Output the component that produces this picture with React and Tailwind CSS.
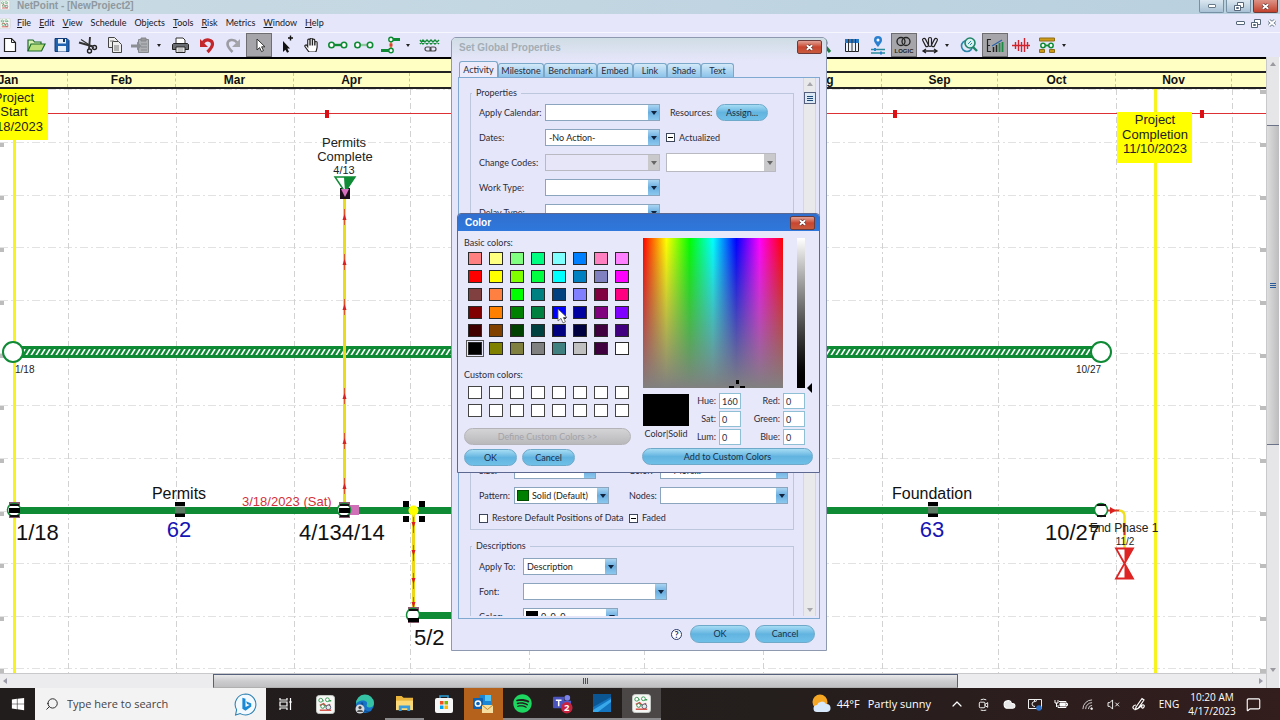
import clsx from 'clsx';
import { Cloud, ChevronUp, MessageSquare, Search, PenTool } from 'lucide-react';
import { FaHandPaper, FaSpotify, FaWindows } from 'react-icons/fa';

const GREEN = '#0f8a35';

const MENU = ['File', 'Edit', 'View', 'Schedule', 'Objects', 'Tools', 'Risk', 'Metrics', 'Window', 'Help'];
const UNDERLINED = ['File', 'Edit', 'View', 'Tools', 'Risk', 'Window', 'Help'];

const MONTHS = [
  { name: 'Jan', width: 119 },
  { name: 'Feb', width: 108 },
  { name: 'Mar', width: 118 },
  { name: 'Apr', width: 116 },
  { name: 'May', width: 119 },
  { name: 'Jun', width: 115 },
  { name: 'Jul', width: 119 },
  { name: 'Aug', width: 119 },
  { name: 'Sep', width: 116 },
  { name: 'Oct', width: 118 },
  { name: 'Nov', width: 116 },
];
const GRID_X = [68, 176, 294, 410, 529, 644, 763, 882, 998, 1116, 1232];
const GRID_Y = [0, 53, 106, 158, 211, 264, 316, 369, 422, 474, 527, 579];

const BASIC_COLORS = [
  '#ff8080', '#ffff80', '#80ff80', '#00ff80', '#80ffff', '#0080ff', '#ff80c0', '#ff80ff',
  '#ff0000', '#ffff00', '#80ff00', '#00ff40', '#00ffff', '#0080c0', '#8080c0', '#ff00ff',
  '#804040', '#ff8040', '#00ff00', '#008080', '#004080', '#8080ff', '#800040', '#ff0080',
  '#800000', '#ff8000', '#008000', '#008040', '#0000ff', '#0000a0', '#800080', '#8000ff',
  '#400000', '#804000', '#004000', '#004040', '#000080', '#000040', '#400040', '#400080',
  '#000000', '#808000', '#808040', '#808080', '#408080', '#c0c0c0', '#400040', '#ffffff',
];

/* ---------- small shared pieces ---------- */

function NetPointIcon({ className }) {
  return (
    <svg viewBox="0 0 20 20" className={className} aria-hidden="true">
      <rect x="0.5" y="0.5" width="19" height="19" rx="3" fill="#f6f7f5" stroke="#c8cdc8" />
      <path d="M3 6h5M11 6h5" stroke="#3b9a55" strokeWidth="1.5" />
      <circle cx="5" cy="5.500" r="2" fill="#fff" stroke="#3b9a55" />
      <circle cx="12" cy="5" r="2" fill="#fff" stroke="#3b9a55" />
      <path d="M4 11l4-2 3 3 4-2" stroke="#d24c43" strokeWidth="1.500" fill="none" />
      <circle cx="7" cy="12" r="2" fill="#fff" stroke="#2f8c4a" />
      <circle cx="13" cy="13" r="2.500" fill="#dfeee2" stroke="#557" />
      <path d="M4 16h12" stroke="#d24c43" strokeWidth="1.500" />
    </svg>
  );
}

function CloseGlyph({ className, stroke = '#fff', edge = '#5b2a2a' }) {
  return (
    <svg viewBox="0 0 10 10" className={className} aria-hidden="true">
      <path d="M2 2.500l6 5M8 2.500l-6 5" stroke={edge} strokeWidth="3.400" />
      <path d="M2 2.500l6 5M8 2.500l-6 5" stroke={stroke} strokeWidth="2" />
    </svg>
  );
}

function CloseButton({ className }) {
  return (
    <button
      aria-label="Close"
      className={clsx('flex h-[14px] w-[25px] items-center justify-center rounded-[2px] border border-[#6b3a3a] bg-linear-to-b from-[#e0a195] via-[#c9452f] via-50% to-[#c75a3c]', className)}
    >
      <CloseGlyph className="size-[9px]" />
    </button>
  );
}

function Pill({ children, className, disabled }) {
  return (
    <button
      disabled={disabled}
      className={clsx(
        'h-[17px] shrink-0 rounded-full border text-center leading-[14px]',
        disabled
          ? 'border-[#b4b4b8] bg-linear-to-b from-[#d4d4d6] to-[#b9b9bc] text-[#a3a3a8]'
          : 'border-[#6fa9c9] bg-linear-to-b from-[#a5dcf4] via-[#62b4e0] via-50% to-[#6fc0e8] text-[#17304a]',
        className
      )}
    >
      {children}
    </button>
  );
}

function Combo({ id, value = '', className, swatch, disabled, tall, label }) {
  return (
    <div className={clsx('relative shrink-0', tall ? 'h-[19px]' : 'h-[17px]', className)}>
      <select
        id={id}
        aria-label={label}
        disabled={disabled}
        defaultValue={value}
        className={clsx(
          'h-full w-full appearance-none border text-[9px] leading-[14px] text-[#222] opacity-100 outline-none',
          swatch ? 'pl-[17px]' : 'pl-[3px]',
          disabled ? 'border-[#b9b9c2]' : 'border-[#8aa5bd]',
          disabled && !tall ? 'bg-[#e6e6f8]' : 'bg-white'
        )}
      >
        <option value={value}>{value}</option>
      </select>
      {swatch && <span className={clsx('absolute top-[3px] left-[3px] h-[11px] w-[12px] border border-black/40', swatch)} />}
      <span
        className={clsx(
          'pointer-events-none absolute inset-y-px right-px flex w-[11px] items-center justify-center',
          disabled ? 'bg-[#c9c9cc]' : 'bg-linear-to-b from-[#a9d4f2] via-[#6aaee0] via-50% to-[#8cc8ee]'
        )}
      >
        <svg viewBox="0 0 6 4" className="h-[4px] w-[6px]" aria-hidden="true">
          <path d="M0 0h6L3 4z" fill={disabled ? '#666' : '#10233f'} />
        </svg>
      </span>
    </div>
  );
}

function Check({ label, mixed }) {
  return (
    <label className="flex items-center gap-[4px]">
      <span className="relative flex size-[9px]">
        <input type="checkbox" className="size-[9px] appearance-none border border-[#3c4658] bg-white" />
        {mixed && <span className="pointer-events-none absolute top-[4px] left-[2px] h-px w-[5px] bg-black" />}
      </span>
      {label}
    </label>
  );
}

/* ---------- title bar, menu, toolbar ---------- */

function TitleBar() {
  return (
    <div className="flex h-[14px] shrink-0 items-start bg-linear-to-r from-[#c9dbe4] to-[#b9d0df]">
      <NetPointIcon className="-ml-px h-[10px] w-[12px]" />
      <h1 className="ml-[6px] font-['Liberation_Sans'] text-[10px] leading-[11px] font-bold text-[#8f989e]">NetPoint - [NewProject2]</h1>
      <div className="ml-auto flex gap-[2px] pr-[2px]">
        <button aria-label="Minimize" className="flex h-[13px] w-[25px] items-center justify-center rounded-b-[2px] border border-t-0 border-[#7890a4] bg-linear-to-b from-[#dbe7f0] to-[#a9c2d6]">
          <span className="h-[4px] w-[8px] rounded-[1px] border border-[#68798a] bg-white" />
        </button>
        <button aria-label="Restore" className="flex h-[13px] w-[25px] items-center justify-center rounded-b-[2px] border border-t-0 border-[#7890a4] bg-linear-to-b from-[#dbe7f0] to-[#a9c2d6]">
          <RestoreGlyph />
        </button>
        <button aria-label="Close" className="flex h-[13px] w-[25px] items-center justify-center rounded-b-[2px] border border-t-0 border-[#6b3a3a] bg-linear-to-b from-[#dc9387] to-[#c23f2c]">
          <CloseGlyph className="size-[9px]" />
        </button>
      </div>
    </div>
  );
}

function RestoreGlyph() {
  return (
    <svg viewBox="0 0 10 9" className="h-[9px] w-[10px]" fill="#fff" stroke="#56677a" aria-hidden="true">
      <path d="M3.500 0.500h6v5h-6z" />
      <path d="M0.500 3.500h6v5h-6zM2.500 5.500h2v1h-2z" />
    </svg>
  );
}

function MenuBar() {
  return (
    <nav className="flex h-[18px] shrink-0 items-center bg-[#e6e6fa] text-[9px] text-[#16181c]">
      <NetPointIcon className="-ml-px h-[11px] w-[12px]" />
      <div className="ml-[6px] flex gap-[8px]">
        {MENU.map((item) => (
          <button key={item} className="leading-[12px]">
            {UNDERLINED.includes(item) ? <><u>{item[0]}</u>{item.slice(1)}</> : item}
          </button>
        ))}
      </div>
      <div className="ml-auto flex items-center gap-[6px] pr-[3px]">
        <button aria-label="Minimize document" className="h-[4px] w-[9px] rounded-[1px] border border-[#56677a] bg-white" />
        <button aria-label="Restore document"><RestoreGlyph /></button>
        <button aria-label="Close document"><CloseGlyph className="size-[10px]" edge="#56677a" /></button>
      </div>
    </nav>
  );
}

function Tool({ label, active, children }) {
  return (
    <button
      aria-label={label}
      className={clsx('flex h-full w-[26px] shrink-0 items-center justify-center', active && 'border border-[#6d6d72] bg-[#a6a6aa]')}
    >
      <svg viewBox="0 0 22 20" className="h-[20px] w-[22px] shrink-0" fill="none">{children}</svg>
    </button>
  );
}

function DropArrow({ wide }) {
  return (
    <button aria-label="More" className={clsx('flex h-full shrink-0 items-center', wide ? 'w-[15px] pl-[4px]' : 'w-[13px] pl-[2px]')}>
      <svg viewBox="0 0 4 3" className="h-[3px] w-[4px]"><path d="M0 0h4L2 3z" fill="#222" /></svg>
    </button>
  );
}

function Toolbar() {
  return (
    <div className="flex h-[25px] shrink-0 items-center overflow-hidden border-t border-[#f6f6ff] bg-[#e6e6fa]">
      <div className="-ml-[3px] flex h-full">
        <Tool label="New">
          <path d="M5.500 3.500h7l4 4v9h-11z" fill="#fff" stroke="#222" strokeWidth="1.200" />
          <path d="M12.500 3.500v4h4" stroke="#222" />
        </Tool>
        <Tool label="Open">
          <path d="M3 16V5h5l1.500 2H16v2" fill="#d9efb0" stroke="#1d6b2c" strokeWidth="1.200" />
          <path d="M3 16l3-7h14l-3.500 7z" fill="#b9e07c" stroke="#1d6b2c" strokeWidth="1.200" />
        </Tool>
        <Tool label="Save">
          <path d="M4 3.500h12l2 2v11H4z" fill="#1f62ae" stroke="#123d78" />
          <rect x="7" y="4" width="8" height="4.500" fill="#e8f0fa" />
          <rect x="12" y="4" width="2" height="3" fill="#16365f" />
          <rect x="7" y="11" width="8" height="5.500" fill="#e8f0fa" />
        </Tool>
        <Tool label="Cut">
          <circle cx="17.500" cy="12.500" r="2" stroke="#222" strokeWidth="1.400" />
          <circle cx="12.500" cy="16" r="2" stroke="#222" strokeWidth="1.400" />
          <path d="M16 11.500L2 7.500M12 14L13 2" stroke="#333" strokeWidth="1.900" />
          <path d="M4 4.500L17 13" stroke="#333" strokeWidth="1.200" />
        </Tool>
        <Tool label="Copy">
          <path d="M5.500 2.500h6l3 3v7h-9z" fill="#eee" stroke="#444" />
          <path d="M9.500 6.500h6l3 3v8h-9z" fill="#eee" stroke="#444" />
          <path d="M11 11h5M11 13h5M11 15h5M7 6h4" stroke="#777" />
        </Tool>
        <Tool label="Paste">
          <path d="M9.500 4.500h10v13h-10z" fill="#aeb0b4" stroke="#85888c" />
          <path d="M12 3h5v3h-5zM12 9h6M12 12h6M12 15h6" fill="#999" stroke="#85888c" />
          <path d="M2 9.500h6V6.500l4.500 4.500-4.500 4.500v-3H2z" fill="#8b8e93" />
        </Tool>
        <DropArrow wide />
        <Tool label="Print">
          <path d="M6 8V3h7l2 2v3" fill="#fff" stroke="#333" />
          <path d="M3.500 8.500h14l1 1v5h-16v-5z" fill="#6a6d71" stroke="#222" />
          <path d="M6 12h9v5.500H6z" fill="#fff" stroke="#222" />
          <path d="M7.500 14h6M7.500 16h6" stroke="#888" />
        </Tool>
        <Tool label="Undo">
          <path d="M7 7.500C10 3.500 16.500 4.500 16.500 9c0 3-2.500 5.500-5 8" stroke="#c3262b" strokeWidth="3.200" />
          <path d="M4 4v8h8z" fill="#c3262b" />
        </Tool>
        <Tool label="Redo">
          <path d="M15 7.500C12 3.500 5.500 4.500 5.500 9c0 3 2.500 5.500 5 8" stroke="#9b9da2" strokeWidth="2.600" />
          <path d="M18 4v8h-8z" fill="#a3a5aa" />
        </Tool>
        <Tool label="Select" active>
          <path d="M9 4v11l2.600-2.400 1.900 4 2-1-1.900-3.800H17z" fill="#fff" stroke="#333" />
        </Tool>
        <Tool label="Add to selection">
          <path d="M9 6v11l2.400-2.300 1.700 3 1.900-1-1.700-3.200H16z" fill="#111" />
          <path d="M14 3h5M16.500 0.500v5" stroke="#111" strokeWidth="1.400" />
        </Tool>
        <Tool label="Pan">
          <foreignObject x="4" y="3" width="15" height="15">
            <FaHandPaper size={14} color="#fff" stroke="#222" strokeWidth={42} />
          </foreignObject>
        </Tool>
        <Tool label="Activity">
          <path d="M7 10h9" stroke={GREEN} strokeWidth="2.400" />
          <circle cx="5.500" cy="10" r="2.700" fill="#fff" stroke={GREEN} strokeWidth="1.600" />
          <circle cx="18" cy="10" r="2.700" fill="#fff" stroke={GREEN} strokeWidth="1.600" />
        </Tool>
        <Tool label="Embed">
          <path d="M7 10h9" stroke="#8fc7a0" strokeWidth="2.400" />
          <circle cx="5.500" cy="10" r="2.700" fill="#fff" stroke={GREEN} strokeWidth="1.600" />
          <circle cx="18" cy="10" r="2.700" fill="#fff" stroke={GREEN} strokeWidth="1.600" />
        </Tool>
        <Tool label="Link">
          <path d="M14 4.500h8M3 15.500h9" stroke={GREEN} strokeWidth="2.800" />
          <path d="M13 5v10" stroke="#d88a16" strokeWidth="1.600" />
          <circle cx="13" cy="4.500" r="2.200" fill="#fff" stroke={GREEN} strokeWidth="1.400" />
          <circle cx="13" cy="15.500" r="2.200" fill="#fff" stroke={GREEN} strokeWidth="1.400" />
          <path d="M11.500 8.500h3v3h-3z" fill="#d9422b" />
        </Tool>
        <DropArrow wide />
        <Tool label="Chain">
          <path d="M1 5l3 4 4-4 4 4 4-4 4 4M1 9l3-4 4 4 4-4 4 4 4-4" stroke={GREEN} strokeWidth="1.400" />
          <rect x="6" y="12" width="6" height="4" rx="2" stroke="#444" strokeWidth="1.200" />
          <rect x="11" y="12" width="6" height="4" rx="2" stroke="#444" strokeWidth="1.200" />
        </Tool>
      </div>
      <div className="w-[370px] shrink-0" />
      <div className="flex h-full">
        <Tool label="Find">
          <circle cx="7" cy="8" r="4.500" fill="#cfe" stroke="#1b7a3c" strokeWidth="2" />
          <path d="M10 11l5 6" stroke="#1b7a3c" strokeWidth="3" />
        </Tool>
        <Tool label="Columns">
          <path d="M4.500 4.500h13v12h-13z" fill="#eef4fb" stroke="#222" />
          <path d="M4 4h14v4H4z" fill="#2377c4" />
          <path d="M7.500 4v13M11 4v13M14.500 4v13" stroke="#333" />
        </Tool>
        <Tool label="Location">
          <path d="M11 12C8 8 7 7 7 5a4 4 0 018 0c0 2-1 3-4 7z" fill="#2b7fd0" />
          <circle cx="11" cy="5" r="1.500" fill="#fff" />
          <path d="M4 14.500h14M4 18h14" stroke="#2a8a99" strokeWidth="1.400" />
          <path d="M8 13v3M14 16.500v3" stroke="#2b7fd0" strokeWidth="2" />
        </Tool>
        <Tool label="Logic" active>
          <circle cx="8" cy="6.500" r="4" stroke="#222" strokeWidth="1.300" />
          <circle cx="13" cy="6.500" r="4" stroke="#222" strokeWidth="1.300" />
          <text x="11" y="18" textAnchor="middle" fontFamily="Liberation Sans" fontWeight="bold" fontSize="6" fill="#222">LOGIC</text>
        </Tool>
        <Tool label="Bristle">
          <rect x="9.500" y="2.500" width="3" height="9" rx="1.500" stroke="#222" strokeWidth="1.200" />
          <rect x="5" y="3" width="3" height="9" rx="1.500" stroke="#222" strokeWidth="1.200" transform="rotate(-28 6.500 7.500)" />
          <rect x="14" y="3" width="3" height="9" rx="1.500" stroke="#222" strokeWidth="1.200" transform="rotate(28 15.500 7.500)" />
          <path d="M5 16h12M7 14l-3 2 3 2M15 14l3 2-3 2" stroke="#222" strokeWidth="1.300" />
        </Tool>
        <DropArrow />
        <Tool label="Zoom">
          <circle cx="9" cy="11" r="5.500" stroke="#2a86a8" strokeWidth="1.600" />
          <circle cx="12" cy="8" r="5" fill="#d6f0f0" stroke="#1f8468" strokeWidth="1.600" />
          <path d="M10 9l3-3M12 10l2-2" stroke="#2a86a8" />
          <path d="M15 12l4 4" stroke="#1f8468" strokeWidth="2.400" />
        </Tool>
        <Tool label="Histogram" active>
          <path d="M3.500 4v13M3 4.500h4M3 10.500h3M3 16.500h4" stroke="#222" strokeWidth="1.200" />
          <path d="M9.500 17v-5M12.500 17V10" stroke="#222" strokeWidth="1.500" />
          <path d="M15.500 17v-9M18.500 17V7" stroke="#1b8a44" strokeWidth="1.800" />
          <path d="M8 11l5-3 5-3" stroke="#2a62a8" strokeWidth="1.200" />
        </Tool>
        <Tool label="Risk bars">
          <path d="M2 10.500h18" stroke="#d2222a" strokeWidth="1.500" />
          <path d="M5.500 7v7M8.500 5v11M11.500 7v10M14.500 3v14M17.500 7v7" stroke="#cf2430" strokeWidth="1.400" />
        </Tool>
        <Tool label="Layout">
          <path d="M3.500 3h15v3h-15zM3.500 14.500h5v3h-5zM13.500 14.500h5v3h-5z" fill="#cf9a14" stroke="#8d6f1d" />
          <path d="M8 10.500h6" stroke={GREEN} strokeWidth="1.800" />
          <circle cx="7" cy="10.500" r="2.200" fill="#fff" stroke={GREEN} strokeWidth="1.500" />
          <circle cx="15" cy="10.500" r="2.200" fill="#fff" stroke={GREEN} strokeWidth="1.500" />
        </Tool>
        <DropArrow />
      </div>
    </div>
  );
}

/* ---------- schedule canvas ---------- */

function FlowArrow({ x, y, down }) {
  const d = down ? `M${x - 2} ${y - 3}h4l-2 6z` : `M${x - 2} ${y + 3}h4l-2 -6z`;
  return (
    <g>
      <path d={`M${x} ${y - 8}v16`} stroke="#d9591f" />
      <path d={d} fill="#dc1f1f" />
    </g>
  );
}

function BusyNode({ x, y, black = 'middle' }) {
  return (
    <g>
      {black !== 'none' && <rect x={x - 5} y={y - 8} width="11" height="16" fill="#8a5a70" />}
      <circle cx={x} cy={y} r="6.500" fill="#fff" stroke={GREEN} strokeWidth="1.500" />
      <path d={`M${x - 4} ${y - 5}h9M${x - 4} ${y + 6}h9`} stroke="#111" strokeWidth="2" />
      {black === 'middle' && <rect x={x - 5} y={y - 2} width="11" height="5" fill="#000" />}
      {black === 'bottom' && <rect x={x - 5} y={y + 3} width="11" height="4" fill="#000" />}
    </g>
  );
}

function Schedule() {
  return (
    <svg className="block h-full w-full bg-white" fontFamily="Liberation Sans, sans-serif" fill="#222">
      <defs>
        <pattern id="hatch" width="5" height="8" y="260" patternUnits="userSpaceOnUse">
          <rect width="5" height="8" fill={GREEN} />
          <path d="M-5 8L0 0M0 8L5 0M5 8L10 0" stroke="#fff" strokeWidth="1.700" />
        </pattern>
      </defs>

      {GRID_Y.map((y) => (
        <g key={y}>
          <path d={`M0 ${y}.5H1262`} stroke="#e2e2e2" strokeDasharray="8 3 2 3" />
          <path d={`M0 ${y + 3}h4M1260 ${y + 3}h6`} stroke="#bdbdbd" strokeWidth="4" />
        </g>
      ))}
      {GRID_X.map((x) => (
        <path key={x} d={`M${x}.5 0V584`} stroke="#d2d2d2" strokeDasharray="6 3 2 3" />
      ))}

      <path d="M0 24.500H1266" stroke="#dd3034" />
      <path d="M327 21v8M895 21v8M1202 21v8" stroke="#dc0f14" strokeWidth="4" />

      <path d="M14.500 0V584M1155.500 0V584" stroke="#f7f320" strokeWidth="3" />
      <rect x="-20" y="0" width="68" height="51" fill="#ff0" />
      <rect x="1117" y="23" width="75" height="51" fill="#ff0" />
      <g fontSize="13" textAnchor="middle">
        <text x="14" y="13">Project</text>
        <text x="14" y="27">Start</text>
        <text x="14" y="42">1/18/2023</text>
        <text x="1155" y="35">Project</text>
        <text x="1155" y="50">Completion</text>
        <text x="1155" y="64">11/10/2023</text>
        <text x="344" y="58">Permits</text>
        <text x="345" y="72">Complete</text>
      </g>
      <text x="344" y="85" fontSize="11" textAnchor="middle">4/13</text>

      {/* summary bar */}
      <rect x="14" y="257" width="1086" height="12" fill={GREEN} />
      <rect x="22" y="260" width="1070" height="6" fill="url(#hatch)" />
      <circle cx="13" cy="263" r="10" fill="#fff" stroke={GREEN} strokeWidth="2" />
      <circle cx="1101" cy="263" r="10" fill="#fff" stroke={GREEN} strokeWidth="2" />
      <text x="15" y="284" fontSize="10">1/18</text>
      <text x="1076" y="284" fontSize="10">10/27</text>

      {/* permits link */}
      <path d="M344.500 108V416" stroke="#e8dc1c" strokeWidth="3" />
      {[128, 173, 218, 307, 352, 397].map((y) => <FlowArrow key={y} x={344.5} y={y} />)}
      <rect x="340" y="99" width="10" height="11" fill="#1d0f1d" />
      <path d="M335 88h20l-10 15z" fill="#fff" stroke={GREEN} strokeWidth="1.500" />
      <path d="M344 88h11l-10 15z" fill={GREEN} />
      <path d="M341 100h8l-4 8z" fill="#d86fc0" />

      {/* main activities */}
      <path d="M14 421.500H1101" stroke={GREEN} strokeWidth="7" />
      <path d="M413 526.500H700" stroke={GREEN} strokeWidth="7" />
      <path d="M180 413v4M180 424v4M933 413v4M933 424v4" stroke="#000" strokeWidth="10" />
      <path d="M175 421h10M928 421h10" stroke="#5a7a62" strokeWidth="7" />
      <BusyNode x={14} y={421} />
      <rect x="349" y="416" width="10" height="10" fill="#d06fb8" />
      <BusyNode x={344} y={421} />
      <path d="M1105 421.500h15" stroke="#d9401f" strokeWidth="2" />
      <path d="M1110 418l6 3.500-6 3.500z" fill="#dc1f1f" />
      <path d="M1119 421.500q5 0 5.500 5V459" stroke="#eee01c" strokeWidth="2.500" fill="none" />
      <path d="M1124.500 434v12" stroke="#c8301f" strokeWidth="2" />
      <BusyNode x={1101} y={421} black="none" />

      <path d="M413.500 425V520" stroke="#ecd71a" strokeWidth="3" />
      {[436, 464, 492, 516].map((y) => <FlowArrow key={y} x={413.5} y={y} down />)}
      <path d="M403 412h6v6h-6zM419 412h6v6h-6zM403 427h6v6h-6zM419 427h6v6h-6z" fill="#000" />
      <circle cx="413.500" cy="421.500" r="5" fill="#ff0" />
      <BusyNode x={413} y={526} black="bottom" />

      <g fill="#111">
        <text x="179" y="410" fontSize="16" textAnchor="middle">Permits</text>
        <text x="932" y="410" fontSize="16" textAnchor="middle">Foundation</text>
        <text x="242" y="417" fontSize="13" fill="#d43038">3/18/2023 (Sat)</text>
        <text x="16" y="451" fontSize="22">1/18</text>
        <text x="299" y="451" fontSize="22">4/134/14</text>
        <text x="414" y="556" fontSize="22">5/2</text>
        <text x="1045" y="451" fontSize="22">10/27</text>
      </g>
      <g fontSize="22" fill="#1515b5" textAnchor="middle">
        <text x="179" y="448">62</text>
        <text x="932" y="448">63</text>
      </g>
      <text x="1124" y="443" fontSize="12" textAnchor="middle">End Phase 1</text>
      <text x="1125" y="456" fontSize="10" textAnchor="middle">11/2</text>
      <path d="M1116 459.500h17l-8.500 15 8.500 15h-17l8.500-15z" fill="#fff" stroke="#dc2424" strokeWidth="1.800" />
      <path d="M1124.500 459h9l-9 15.500 9 15.500h-9z" fill="#e02424" />
    </svg>
  );
}

function Workspace() {
  return (
    <main className="flex min-h-0 flex-1 pr-px">
      <div className="flex min-w-0 flex-1 flex-col overflow-hidden">
        <div className="h-[16px] shrink-0 border-y-2 border-t-black border-b-[#222] bg-[#ffffc4]" />
        <div className="-ml-[51px] flex h-[16px] shrink-0 border-b-2 border-[#222] bg-[#ffffc4] font-['Liberation_Sans'] text-[12px] leading-[14px] font-bold text-[#111]">
          {MONTHS.map((m) => (
            <div key={m.name} className="shrink-0 border-r border-dashed border-[#c8c8a4] text-center" style={{ width: m.width }}>{m.name}</div>
          ))}
        </div>
        <div className="min-h-0 flex-1"><Schedule /></div>
        <div className="flex h-[15px] shrink-0 items-stretch border-t border-[#c9c9cc] bg-[#ececee]">
          <div className="flex w-[213px] items-center pl-[3px]">
            <svg viewBox="0 0 4 6" className="h-[6px] w-[4px]"><path d="M4 0v6L0 3z" fill="#9a9aa8" /></svg>
          </div>
          <div className="flex w-[745px] items-center justify-center gap-px border border-[#55607c] border-b-[#b0b0b0] bg-linear-to-b from-[#e9e9ea] via-[#cdcdcf] via-50% to-[#c0c0c2]">
            <i className="h-[6px] w-px bg-[#2a5a78]" /><i className="h-[6px] w-px bg-[#2a5a78]" /><i className="h-[6px] w-px bg-[#2a5a78]" />
          </div>
          <div className="flex flex-1 items-center justify-end pr-[3px]">
            <svg viewBox="0 0 4 6" className="h-[6px] w-[4px]"><path d="M0 0v6l4-3z" fill="#9a9aa8" /></svg>
          </div>
        </div>
      </div>
      <div className="flex w-[13px] shrink-0 flex-col border-l border-[#c9c9cc] bg-[#e6e6e8]">
        <div className="flex h-[68px] justify-center pt-[5px]">
          <svg viewBox="0 0 6 4" className="h-[4px] w-[6px]"><path d="M0 4h6L3 0z" fill="#9a9aa0" /></svg>
        </div>
        <div className="flex h-[320px] flex-col items-center justify-center gap-px border-y border-[#6c7288] bg-linear-to-r from-[#dededf] to-[#bcbcbe]">
          <i className="h-px w-[6px] bg-[#2a5a98]" /><i className="h-px w-[6px] bg-[#2a5a98]" /><i className="h-px w-[6px] bg-[#2a5a98]" />
        </div>
        <div className="flex flex-1 items-end justify-center pb-[16px]">
          <svg viewBox="0 0 6 4" className="h-[4px] w-[6px]"><path d="M0 0h6L3 4z" fill="#9a9aa0" /></svg>
        </div>
      </div>
    </main>
  );
}

/* ---------- dialogs ---------- */

const TABS = [
  { name: 'Milestone', width: 'w-[46px]' },
  { name: 'Benchmark', width: 'w-[53px]' },
  { name: 'Embed', width: 'w-[36px]' },
  { name: 'Link', width: 'w-[34px]' },
  { name: 'Shade', width: 'w-[34px]' },
  { name: 'Text', width: 'w-[33px]' },
];

function Row({ children }) {
  return <div className="flex h-[25px] items-center">{children}</div>;
}

function PropertiesDialog() {
  return (
    <section className="absolute top-[37px] left-[451px] flex w-[376px] flex-col rounded-t-[5px] border border-[#8e98ae] bg-[#e6e6fa] text-[#2c2c3a]">
      <header className="flex h-[23px] items-start justify-between rounded-t-[4px] bg-linear-to-b from-[#cfdde5] to-[#e6e6fa] pt-[2px] pr-[4px] pl-[7px]">
        <h2 className="font-['Liberation_Sans'] text-[10px] leading-[15px] font-bold text-[#a3adb5]">Set Global Properties</h2>
        <CloseButton />
      </header>
      <div className="flex items-end pl-[7px]">
        <button className="h-[16px] w-[39px] rounded-t-[3px] border border-b-0 border-[#7ba7c9] bg-[#ecebfb] leading-[13px]">Activity</button>
        {TABS.map((tab) => (
          <button key={tab.name} className={clsx('h-[14px] rounded-t-[3px] border border-b-0 border-[#7ba7c9] bg-linear-to-b from-[#d3e9f8] to-[#8cc3ea] leading-[12px]', tab.width)}>
            {tab.name}
          </button>
        ))}
      </div>
      <div className="mx-[6px] flex h-[542px] border border-[#7fa9d0] pb-[2px]">
        <div className="min-w-0 flex-1 overflow-hidden pt-[9px] pr-[9px] pl-[11px]">
          <fieldset className="border border-[#bcc6dc] pb-px pl-[8px]">
            <legend className="-ml-[7px] px-[4px] leading-[12px]">Properties</legend>
            <div className="h-px" />
            <Row>
              <label htmlFor="calendar" className="w-[66px]">Apply Calendar:</label>
              <Combo id="calendar" className="w-[115px]" />
              <span className="ml-[10px] w-[46px]">Resources:</span>
              <Pill className="w-[52px]">Assign...</Pill>
            </Row>
            <Row>
              <label htmlFor="dates" className="w-[66px]">Dates:</label>
              <Combo id="dates" value="-No Action-" className="mr-[6px] w-[115px]" />
              <Check label="Actualized" mixed />
            </Row>
            <Row>
              <label htmlFor="codes" className="w-[66px]">Change Codes:</label>
              <Combo id="codes" disabled className="mr-[6px] w-[115px]" />
              <Combo label="Code value" disabled tall className="w-[110px]" />
            </Row>
            <Row>
              <label htmlFor="work" className="w-[66px]">Work Type:</label>
              <Combo id="work" className="w-[115px]" />
            </Row>
            <Row>
              <label htmlFor="delay" className="w-[66px]">Delay Type:</label>
              <Combo id="delay" className="w-[115px]" />
            </Row>
            <div className="h-[233px]" />
            <Row>
              <label htmlFor="size" className="w-[35px]">Size:</label>
              <Combo id="size" className="w-[82px]" />
              <label htmlFor="actcolor" className="ml-[33px] w-[31px]">Color:</label>
              <Combo id="actcolor" value="— More..." className="w-[128px]" />
            </Row>
            <Row>
              <label htmlFor="pattern" className="w-[35px]">Pattern:</label>
              <Combo id="pattern" value="Solid (Default)" swatch="bg-[#008000]" className="w-[95px]" />
              <label htmlFor="nodes" className="ml-[20px] w-[31px]">Nodes:</label>
              <Combo id="nodes" className="w-[128px]" />
            </Row>
            <div className="flex h-[20px] items-center">
              <div className="w-[150px]"><Check label="Restore Default Positions of Data" /></div>
              <Check label="Faded" mixed />
            </div>
          </fieldset>
          <fieldset className="mt-[10px] border border-[#bcc6dc] pl-[8px]">
            <legend className="-ml-[7px] px-[4px] leading-[12px]">Descriptions</legend>
            <div className="h-[2px]" />
            <Row>
              <label htmlFor="applyto" className="w-[44px]">Apply To:</label>
              <Combo id="applyto" value="Description" className="w-[94px]" />
            </Row>
            <Row>
              <label htmlFor="font" className="w-[44px]">Font:</label>
              <Combo id="font" className="w-[144px]" />
            </Row>
            <Row>
              <label htmlFor="desccolor" className="w-[44px]">Color:</label>
              <Combo id="desccolor" value="0, 0, 0" swatch="bg-black" className="w-[95px]" />
            </Row>
          </fieldset>
        </div>
        <div className="mr-[3px] flex w-[13px] shrink-0 flex-col items-center justify-between border-x border-[#d6d6dc] bg-[#e9e8ea] pt-[4px] pb-[4px]">
          <div className="flex flex-col items-center">
            <svg viewBox="0 0 6 4" className="h-[4px] w-[6px]"><path d="M0 4h6L3 0z" fill="#a8a8ac" /></svg>
            <div className="mt-[6px] flex h-[12px] w-[12px] flex-col items-center justify-center gap-px border border-[#56607c] bg-[#dce9f4]">
              <i className="h-px w-[6px] bg-[#1d4a78]" /><i className="h-px w-[6px] bg-[#1d4a78]" /><i className="h-px w-[6px] bg-[#1d4a78]" />
            </div>
          </div>
          <svg viewBox="0 0 6 4" className="h-[4px] w-[6px]"><path d="M0 0h6L3 4z" fill="#a8a8ac" /></svg>
        </div>
      </div>
      <footer className="flex h-[31px] items-center justify-end gap-[5px] pr-[11px] pb-px">
        <button aria-label="Help" className="mr-[3px] flex size-[11px] items-center justify-center rounded-full border border-[#2a3a6c] bg-white text-[9px] leading-none font-bold text-[#2a3a6c]">?</button>
        <Pill className="h-[18px] w-[60px]">OK</Pill>
        <Pill className="h-[18px] w-[60px]">Cancel</Pill>
      </footer>
    </section>
  );
}

function NumberField({ id, label, value, wide }) {
  return (
    <div className="flex h-[18px] items-center justify-end">
      <label htmlFor={id} className={clsx('pr-[3px] text-right', wide ? 'w-[40px]' : 'w-[29px]')}>{label}</label>
      <input id={id} defaultValue={value} className="h-[16px] w-[22px] border border-[#8fbfd4] bg-white pl-[2px] text-[9px] outline-none" />
    </div>
  );
}

function ColorDialog() {
  return (
    <section className="absolute top-[213px] left-[457px] w-[363px] rounded-t-[4px] border border-[#5c6890] bg-[#e8e8fb] text-[#2c2c3a]">
      <header className="flex h-[17px] items-center justify-between rounded-t-[3px] bg-linear-to-b from-[#2f6fcf] to-[#2f78dc] pr-[4px] pl-[7px]">
        <h2 className="font-['Liberation_Sans'] text-[10px] font-bold text-white">Color</h2>
        <CloseButton />
      </header>
      <div className="flex justify-between px-[6px] pt-[6px] pb-[6px]">
        <div className="w-[167px]">
          <p className="leading-[12px]">Basic colors:</p>
          <div className="mt-[3px] ml-[4px] grid w-fit grid-cols-8 gap-x-[7px] gap-y-[5px]">
            {BASIC_COLORS.map((c, i) => (
              <button
                key={i}
                aria-label={c}
                className={clsx('h-[13px] w-[14px] border border-[#2a2a2a]', c === '#000000' && 'outline outline-offset-1 outline-[#555]')}
                style={{ backgroundColor: c }}
              />
            ))}
          </div>
          <p className="mt-[14px] leading-[12px]">Custom colors:</p>
          <div className="mt-[5px] ml-[4px] grid w-fit grid-cols-8 gap-x-[7px] gap-y-[5px]">
            {Array.from({ length: 16 }, (_, i) => (
              <button key={i} aria-label={`Custom ${i + 1}`} className="h-[13px] w-[14px] border border-[#444] bg-white" />
            ))}
          </div>
          <Pill disabled className="mt-[11px] block w-[167px]">Define Custom Colors &gt;&gt;</Pill>
          <div className="mt-[4px] flex gap-[5px]">
            <Pill className="w-[53px]">OK</Pill>
            <Pill className="w-[53px]">Cancel</Pill>
          </div>
        </div>
        <div className="w-[171px]">
          <div className="flex pt-px pl-px">
            <div className="relative h-[150px] w-[140px] bg-[linear-gradient(to_bottom,transparent,#808080),linear-gradient(to_right,#f00,#ff0,#0f0,#0ff,#00f,#f0f,#f00)]">
              <svg viewBox="0 0 16 8" className="absolute right-[38px] bottom-0 h-[8px] w-[16px]">
                <path d="M7 0h3v4H7zM0 6h5v2H0zM11 6h5v2h-5z" fill="#000" />
              </svg>
            </div>
            <div className="ml-[14px] h-[150px] w-[8px] bg-linear-to-b from-white to-black" />
            <svg viewBox="0 0 5 10" className="-mb-[5px] ml-[2px] h-[10px] w-[5px] self-end"><path d="M5 0v10L0 5z" fill="#000" /></svg>
          </div>
          <div className="flex pt-[4px] pl-px">
            <div className="w-[46px] pt-[2px] text-center">
              <div className="h-[32px] bg-black" />
              <p className="pt-[2px] leading-[12px] whitespace-nowrap">Color|Solid</p>
            </div>
            <div className="ml-px">
              <NumberField id="hue" label="Hue:" value="160" />
              <NumberField id="sat" label="Sat:" value="0" />
              <NumberField id="lum" label="Lum:" value="0" />
            </div>
            <div className="ml-[2px]">
              <NumberField id="red" label="Red:" value="0" wide />
              <NumberField id="green" label="Green:" value="0" wide />
              <NumberField id="blue" label="Blue:" value="0" wide />
            </div>
          </div>
          <Pill className="mt-[2px] block w-[171px]">Add to Custom Colors</Pill>
        </div>
      </div>
    </section>
  );
}

/* ---------- taskbar ---------- */

function TaskButton({ label, running, className, children }) {
  return (
    <button aria-label={label} className={clsx('flex h-full flex-1 items-center justify-center', running && 'border-b-2 border-[#8a8a8c]', className)}>
      {children}
    </button>
  );
}

function TrayButton({ label, children }) {
  return <button aria-label={label} className="flex w-[26px] items-center justify-center">{children}</button>;
}

function Taskbar() {
  return (
    <footer className="flex h-[32px] shrink-0 items-stretch bg-linear-to-r from-[#211d1c] via-[#241e1d] via-60% to-[#331d1d] font-['Open_Sans'] text-[11px] text-white">
      <button aria-label="Start" className="flex w-[35px] shrink-0 items-center justify-center"><FaWindows size={14} /></button>
      <label className="flex w-[231px] shrink-0 items-center bg-[#f3f3f4] pr-[9px] pl-[10px] text-[#222]">
        <Search size={14} strokeWidth={1.6} className="-scale-x-100" />
        <input placeholder="Type here to search" aria-label="Search" className="ml-[8px] min-w-0 flex-1 bg-transparent text-[11px] outline-none placeholder:text-[#444]" />
        <svg viewBox="0 0 22 22" className="size-[23px]" aria-hidden="true">
          <path d="M11 1a10 10 0 11-5 18.700L1.500 21 2.500 16A10 10 0 0111 1z" fill="#f2faff" stroke="#2c7fb0" />
          <path d="M8 4.500l3 1v8l4-2-2.500-1-1-2.500 5 2v3L11 17l-3-2z" fill="#1b8ad6" />
        </svg>
      </label>
      <div className="flex w-[395px] shrink-0">
        <TaskButton label="Task view">
          <svg viewBox="0 0 14 14" className="size-[14px]" fill="none" stroke="#fff" strokeWidth="1.200">
            <path d="M1 1v2h7V1M1 13v-2h7v2M1 5h7v4H1zM11.500 1v12M10 5h3" />
          </svg>
        </TaskButton>
        <TaskButton label="NetPoint"><NetPointIcon className="size-[19px]" /></TaskButton>
        <TaskButton label="Edge">
          <svg viewBox="0 0 20 20" className="size-[20px]">
            <circle cx="10" cy="10" r="9" fill="#1673c8" />
            <path d="M1 10a9 9 0 0118-1c0 3-2 4.500-4.500 4.500S11 12 12 10s-2-4-5-3.500S2 8 1 10z" fill="#36c2a4" />
            <path d="M7 8c-3 2-2 7 1 9s7 1 8 0c-4 1-7-1-7.500-4S9 9 7 8z" fill="#0d4f99" />
            <circle cx="5" cy="15" r="4.500" fill="#d6dade" />
            <circle cx="5" cy="13.500" r="1.600" fill="#444" />
            <path d="M2 18c0-3 6-3 6 0z" fill="#555" />
          </svg>
        </TaskButton>
        <TaskButton label="Explorer" running>
          <svg viewBox="0 0 20 18" className="h-[17px] w-[19px]">
            <path d="M1 1h6l2 2h10v13H1z" fill="#e9b53c" />
            <path d="M1 6h18v10H1z" fill="#fbd977" />
            <path d="M4 17v-6h12v6h-3v-3H7v3z" fill="#3a9bdc" />
          </svg>
        </TaskButton>
        <TaskButton label="Store">
          <svg viewBox="0 0 20 20" className="size-[20px]">
            <path d="M6 5V2h8v3" fill="none" stroke="#2a9fd8" strokeWidth="1.600" />
            <rect x="1" y="4" width="18" height="15" rx="2" fill="#f6f6f6" />
            <path d="M6 7h3.500v3.500H6z" fill="#f05022" /><path d="M10.500 7H14v3.500h-3.500z" fill="#7fba00" />
            <path d="M6 11.500h3.500V15H6z" fill="#00a3ee" /><path d="M10.500 11.500H14V15h-3.500z" fill="#ffb900" />
          </svg>
        </TaskButton>
        <TaskButton label="Outlook" className="bg-[#b5631c]">
          <svg viewBox="0 0 22 20" className="h-[20px] w-[22px]">
            <path d="M7 1h12v12H7z" fill="#1b87d4" /><path d="M13 1h6v6h-6z" fill="#50c4f5" />
            <rect x="1" y="4" width="10" height="11" rx="1" fill="#0f62b2" />
            <circle cx="6" cy="9.500" r="2.600" fill="none" stroke="#fff" strokeWidth="1.500" />
            <path d="M10 11h11v8H10z" fill="#f6dda0" /><path d="M10 11l5.500 4.500L21 11" fill="none" stroke="#c58a2a" />
          </svg>
        </TaskButton>
        <TaskButton label="Spotify" running><FaSpotify size={19} color="#1ed760" /></TaskButton>
        <TaskButton label="Teams" running>
          <svg viewBox="0 0 22 22" className="size-[21px]">
            <circle cx="16" cy="5" r="3" fill="#7b83eb" /><path d="M9 8h11v7a5 5 0 01-9 3z" fill="#5059c9" />
            <rect x="1" y="4" width="12" height="12" rx="1" fill="#4b53bc" />
            <path d="M4 7.500h6M7 7.500V14" stroke="#fff" strokeWidth="1.600" />
            <circle cx="15.500" cy="15.500" r="6" fill="#c9243f" />
            <text x="15.500" y="19" fontSize="10" fontWeight="bold" textAnchor="middle" fill="#fff">2</text>
          </svg>
        </TaskButton>
        <TaskButton label="Viewer" running>
          <svg viewBox="0 0 20 20" className="size-[20px]">
            <path d="M1 1h18v18H1z" fill="#1474bd" /><path d="M1 14L19 4V1H1z" fill="#0b5592" /><path d="M1 17L19 6v3L6 19H1z" fill="#39a8ea" />
          </svg>
        </TaskButton>
        <TaskButton label="NetPoint window" running className="bg-[#4b4747]"><NetPointIcon className="size-[19px]" /></TaskButton>
      </div>
      <div className="ml-auto flex items-stretch pr-[12px]">
        <button className="mr-[13px] flex items-center whitespace-nowrap">
          <svg viewBox="0 0 20 20" className="mr-[6px] size-[20px]">
            <circle cx="9" cy="8" r="7.500" fill="#f5a623" />
            <path d="M6 18a3.500 3.500 0 010-7 5 5 0 019-1 4 4 0 011 8z" fill="#d8e9fb" />
          </svg>
          44°F<span className="ml-[8px]">Partly sunny</span>
        </button>
        <TrayButton label="Show hidden icons"><ChevronUp size={16} strokeWidth={1.8} /></TrayButton>
        <TrayButton label="Meet now">
          <svg viewBox="0 0 14 14" className="size-[13px]" fill="none" stroke="#fff">
            <rect x="2.500" y="4.500" width="6" height="6" rx="1" /><path d="M8.500 7l3-2v5l-3-2M4 2q3-1.500 6 0M4 13q3 1 6 0" />
          </svg>
        </TrayButton>
        <TrayButton label="OneDrive"><Cloud size={13} fill="#e8e8e8" /></TrayButton>
        <TrayButton label="Update">
          <svg viewBox="0 0 16 14" className="h-[14px] w-[16px]" fill="none" stroke="#eee">
            <path d="M1.500 2.500h13v9h-13zM8 4.500q-3 0-3 2.500t3 2.500M8 4.500l-1-2M8 4.500l2-1" /><circle cx="12" cy="11" r="2.800" fill="#2c6fc4" stroke="none" />
          </svg>
        </TrayButton>
        <TrayButton label="Battery">
          <svg viewBox="0 0 14 10" className="h-[10px] w-[14px]" fill="none" stroke="#fff">
            <path d="M5 2.500h7v6H4V6M12 4.500h1.500v2H12M1 1v3h3V1M2.500 4v4" /><path d="M6 4h5v3H6z" fill="#fff" />
          </svg>
        </TrayButton>
        <TrayButton label="Network">
          <svg viewBox="0 0 12 12" className="size-[11px]" fill="none" stroke="#ddd">
            <path d="M1 11A10 10 0 0111 1M4 11a7 7 0 017-7M7 11a4 4 0 014-4" /><circle cx="10.500" cy="10.500" r="1" fill="#fff" />
          </svg>
        </TrayButton>
        <TrayButton label="Volume">
          <svg viewBox="0 0 14 12" className="h-[11px] w-[13px]" fill="none" stroke="#fff">
            <path d="M1 4h2l3-3v10L3 8H1zM9 4l4 4M13 4L9 8" />
          </svg>
        </TrayButton>
        <TrayButton label="Pen">
          <svg viewBox="0 0 14 14" className="size-[14px]" fill="none" stroke="#fff" strokeWidth="1.200">
            <path d="M4 10L10 1.500l2 1.500-6 8.500-2.500 1zM4 8C1 8 0 11 2 12s5-1 7-3 4-1 3 1-3 1-2-1" />
          </svg>
        </TrayButton>
        <button className="w-[34px] text-[10px]">ENG</button>
        <button className="w-[52px] text-center text-[10px] leading-[14px] whitespace-nowrap">10:20 AM<br />4/17/2023</button>
        <button aria-label="Notifications" className="flex w-[30px] items-center justify-center"><MessageSquare size={15} strokeWidth={1.8} /></button>
      </div>
    </footer>
  );
}

export default function App() {
  return (
    <div className="relative flex h-screen flex-col overflow-hidden bg-white font-['Lato',sans-serif] text-[9px]">
      <TitleBar />
      <MenuBar />
      <Toolbar />
      <Workspace />
      <Taskbar />
      <PropertiesDialog />
      <ColorDialog />
      <svg viewBox="0 0 11 16" className="pointer-events-none absolute top-[308px] left-[557px] h-[16px] w-[11px]" aria-hidden="true">
        <path d="M1 1v12l3-2.600 2 4.500 2.400-1-2-4.400H10z" fill="#fff" stroke="#555" strokeWidth="0.800" />
      </svg>
    </div>
  );
}
